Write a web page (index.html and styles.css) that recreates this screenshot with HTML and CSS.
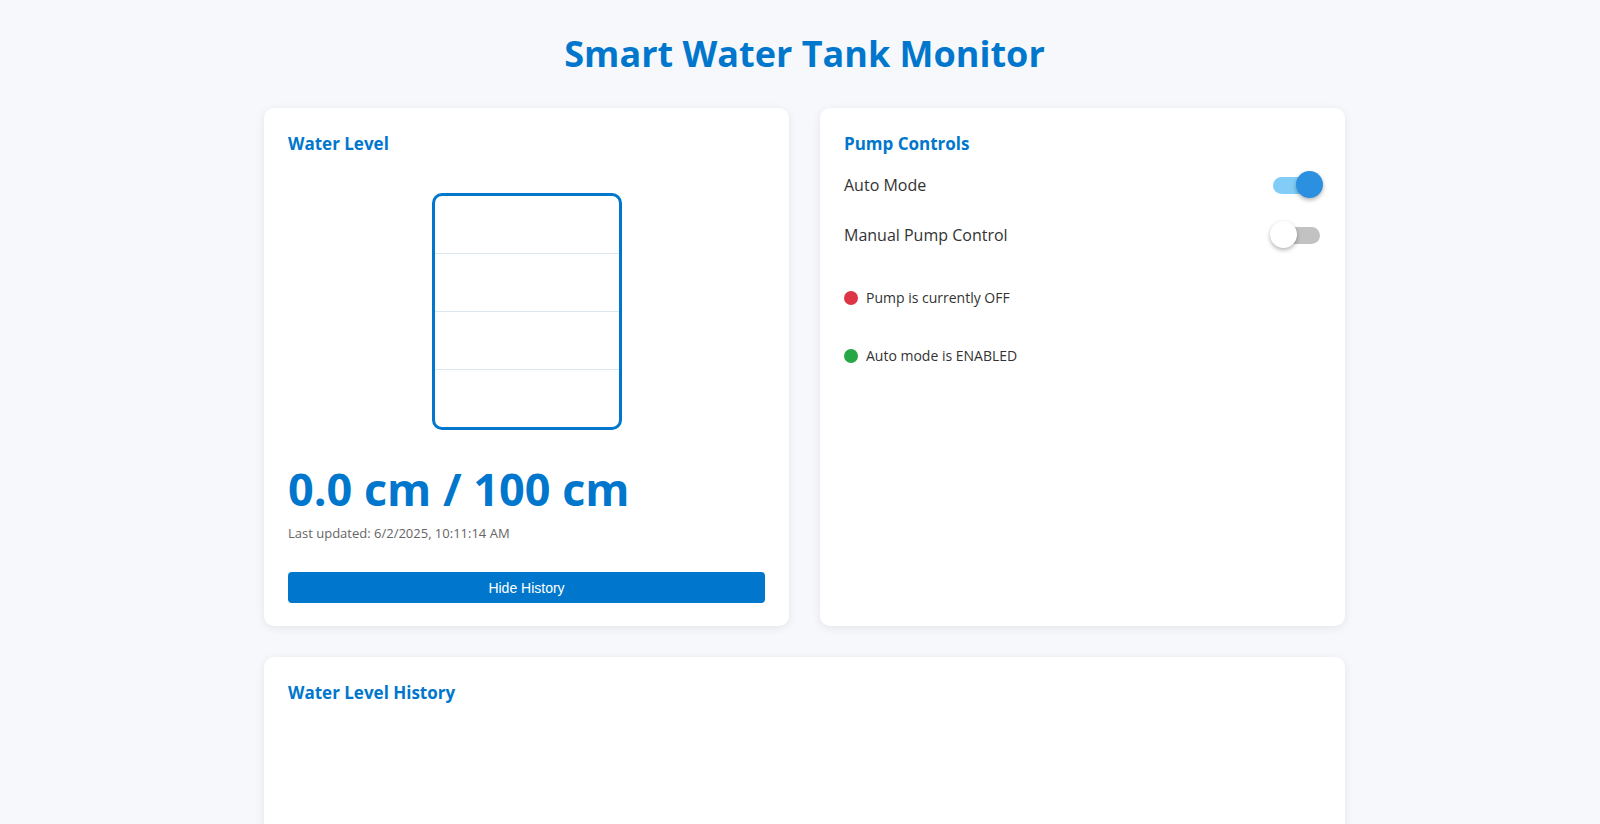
FILE: index.html
```html
<!DOCTYPE html>
<html lang="en">
<head>
<meta charset="utf-8">
<title>Smart Water Tank Monitor</title>
<link rel="stylesheet" href="styles.css">
</head>
<body>
<div class="page">
  <h1 class="title">Smart Water Tank Monitor</h1>
  <div class="grid">
    <section class="card level-card">
      <h2 class="card-title">Water Level</h2>
      <div class="tank-wrap">
        <div class="tank">
          <div class="tank-sec"></div>
          <div class="tank-sec"></div>
          <div class="tank-sec"></div>
          <div class="tank-sec"></div>
        </div>
      </div>
      <div class="level-value">0.0 cm / 100 cm</div>
      <div class="updated">Last updated: 6/2/2025, 10:11:14 AM</div>
      <button class="btn">Hide History</button>
    </section>
    <section class="card pump-card">
      <h2 class="card-title">Pump Controls</h2>
      <div class="ctrl-row first">
        <span class="ctrl-label">Auto Mode</span>
        <span class="switch on"><span class="track"></span><span class="knob"></span></span>
      </div>
      <div class="ctrl-row">
        <span class="ctrl-label">Manual Pump Control</span>
        <span class="switch off"><span class="track"></span><span class="knob"></span></span>
      </div>
      <div class="status-list">
        <div class="status"><span class="dot red"></span>Pump is currently OFF</div>
        <div class="status"><span class="dot green"></span>Auto mode is ENABLED</div>
      </div>
    </section>
  </div>
  <section class="card history-card">
    <h2 class="card-title">Water Level History</h2>
  </section>
</div>
</body>
</html>
```
FILE: styles.css
```css
* { box-sizing: border-box; }

body {
  margin: 0;
  padding: 0 0 0 9px;
  background: #f6f8fb;
  font-family: "Open Sans", "Noto Sans", sans-serif;
  color: #333;
}

.page {
  width: 1081px;
  margin: 0 auto;
  padding-top: 30px;
}

.title {
  margin: 0 0 30px;
  text-align: center;
  font-size: 36px;
  line-height: 48px;
  font-weight: 700;
  color: #0077cc;
}

.grid {
  display: grid;
  grid-template-columns: 1fr 1fr;
  gap: 31px;
}

.card {
  background: #fff;
  border-radius: 10px;
  box-shadow: 0 2px 10px rgba(0, 0, 0, 0.08);
  padding: 24px 24px 23px;
}

.card-title {
  margin: 0;
  font-size: 17px;
  line-height: 24px;
  font-weight: 700;
  color: #0077cc;
}

.tank-wrap {
  display: flex;
  justify-content: center;
  margin-top: 37px;
}

.tank {
  width: 190px;
  height: 237px;
  border: 3px solid #0077cc;
  border-radius: 10px;
  display: flex;
  flex-direction: column;
  overflow: hidden;
}

.tank-sec {
  flex: 1;
  border-bottom: 1px solid #dce8f0;
}
.tank-sec:last-child { border-bottom: none; }

.level-value {
  margin-top: 30px;
  font-size: 45px;
  line-height: 58px;
  font-weight: 700;
  color: #0077cc;
}

.updated {
  margin-top: 6px;
  font-size: 13px;
  line-height: 18px;
  color: #666;
}

.btn {
  display: block;
  width: 100%;
  margin-top: 30px;
  height: 31px;
  border: none;
  border-radius: 4px;
  background: #0077cc;
  color: #fff;
  font-family: "Liberation Sans", Arial, sans-serif;
  font-size: 14px;
}

.ctrl-row {
  display: flex;
  align-items: center;
  justify-content: space-between;
  height: 36px;
  margin-top: 14px;
}
.ctrl-row.first { margin-top: 11px; }

.ctrl-label {
  font-size: 16px;
  color: #333;
}

.switch {
  position: relative;
  width: 55px;
  height: 28px;
}
.switch .track {
  position: absolute;
  left: 5px;
  top: 6px;
  width: 45px;
  height: 17px;
  border-radius: 9px;
}
.switch .knob {
  position: absolute;
  top: 0;
  width: 27px;
  height: 27px;
  border-radius: 50%;
  box-shadow: 0 2px 4px rgba(0, 0, 0, 0.3);
}
.switch.on { margin-right: -2px; }
.switch.on .track { background: #81cdf8; }
.switch.on .knob { right: 0; background: #2b90e0; }
.switch.off { margin-right: -4px; }
.switch.off .track { background: #c2c2c2; }
.switch.off .knob { left: 0; background: #fff; }

.status-list {
  margin-top: 35px;
  display: flex;
  flex-direction: column;
  gap: 38px;
}

.status {
  display: flex;
  align-items: center;
  gap: 8px;
  font-size: 14px;
  line-height: 20px;
  color: #333;
}

.dot {
  width: 14px;
  height: 14px;
  border-radius: 50%;
  flex: none;
}
.dot.red { background: #dc3545; }
.dot.green { background: #28a745; }

.history-card {
  margin-top: 31px;
  min-height: 420px;
}
```
